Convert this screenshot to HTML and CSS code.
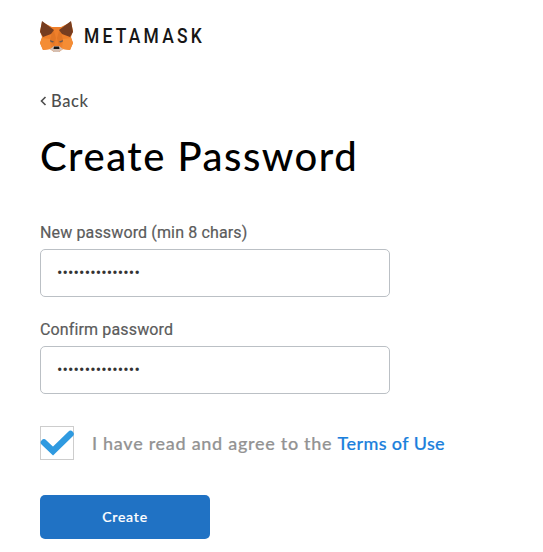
FILE: index.html
```
<!DOCTYPE html>
<html lang="en">
<head>
    <meta charset="UTF-8">
    <meta name="viewport" content="width=device-width, initial-scale=1.0">
    <title>MetaMask</title>
    <link rel="stylesheet" href="styles.css">
</head>
<body>
    <header class="logo">
        <svg class="fox" viewBox="0 0 33 31">
            <path fill="#ef7f2a" d="M2 1 12 6H21L31 1 33 10 31 16 33 22 30 29 23 28 19 31H14L10 28 3 29 0 22 2 16 0 10Z"/>
            <path fill="#f48d35" d="M0 22 2 17 10 18 11 28 3 29ZM33 22 31 17 23 18 22 28 30 29Z"/>
            <path fill="#e27625" d="M13 7 16 17 14 25 10 19ZM20 7 17 17 19 25 23 19Z"/>
            <path fill="#763d20" d="M2 0 14 9 11 13 3 16 0 11ZM31 0 19 9 22 13 30 16 33 11Z"/>
            <path fill="#6d5a50" d="M10 19 14 20.500 13 21.500 10.500 21ZM23 19 19 20.500 20 21.500 22.500 21Z"/>
            <path fill="#d5bfb2" d="M10 28 14 25H19L23 28 19 31H14Z"/>
            <path fill="#161616" d="M14 25.500H19L19.500 28H13.500Z"/>
        </svg>
        <span class="wordmark">METAMASK</span>
    </header>

    <a class="back">
        <svg class="chevron" viewBox="0 0 7 10"><path d="M5.500 1 1.500 5 5.500 9"/></svg>
        <span>Back</span>
    </a>

    <h1>Create Password</h1>

    <form>
        <div class="field">
            <label for="password">New password (min 8 chars)</label>
            <input type="password" id="password" value="abcdefghijklmno">
        </div>
        <div class="field">
            <label for="confirm">Confirm password</label>
            <input type="password" id="confirm" value="abcdefghijklmno">
        </div>

        <div class="terms">
            <div class="checkbox">
                <svg viewBox="0 0 32 32"><path d="M3 15.500 12 24 29.500 7"/></svg>
            </div>
            <p>I have read and agree to the <a>Terms of Use</a></p>
        </div>

        <button type="button">Create</button>
    </form>
</body>
</html>
```
FILE: styles.css
```
* {
    margin: 0;
    padding: 0;
    box-sizing: border-box;
}

body {
    background-color: white;
    font-family: Lato, sans-serif;
    padding: 20px 40px 0;
    overflow: hidden;
}

.logo {
    display: flex;
    align-items: center;
    height: 32px;
}

.fox {
    width: 33px;
    height: 31px;
    margin-right: 11px;
}

/* narrow the letters to get the condensed wordmark */
.wordmark {
    font-family: Roboto, sans-serif;
    font-size: 21px;
    font-weight: 500;
    letter-spacing: 3.9px;
    color: #161616;
    transform: scaleX(0.83);
    transform-origin: left;
}

.back {
    display: flex;
    align-items: center;
    height: 20px;
    margin-top: 39px;
    font-size: 16.5px;
    font-weight: 500;
    letter-spacing: 0.6px;
    color: #4d4d4d;
}

.chevron {
    width: 7px;
    height: 10px;
    margin-right: 4px;
    fill: none;
    stroke: #4d4d4d;
    stroke-width: 1.6;
}

h1 {
    margin-top: 17px;
    height: 57px;
    line-height: 56px;
    font-size: 40px;
    font-weight: 500;
    letter-spacing: 1.5px;
    white-space: nowrap;
}

.field {
    width: 350px;
    margin-bottom: 21px;
}

form {
    padding-top: 36px;
}

label {
    display: block;
    height: 28px;
    line-height: 24px;
    font-family: Roboto, sans-serif;
    font-size: 16px;
    font-weight: 400;
    letter-spacing: 0.14px;
    color: #5b5b5b;
    -webkit-text-stroke: 0.2px;
}

input {
    display: block;
    width: 350px;
    height: 48px;
    padding: 0 16px 2px;
    border: 1px solid #bbc0c5;
    border-radius: 5px;
    font-family: Roboto, sans-serif;
    font-size: 16px;
    letter-spacing: 0.13px;
    color: #333;
}

.terms {
    display: flex;
    align-items: center;
    margin-top: 32px;
    font-size: 18px;
    font-weight: 500;
    letter-spacing: 0.71px;
    color: #939393;
    white-space: nowrap;
    -webkit-text-stroke: 0.2px;
}

.checkbox {
    width: 34px;
    height: 34px;
    margin-right: 18px;
    border: 1px solid #cdcdcd;
}

.checkbox svg {
    display: block;
    fill: none;
    stroke: #2f9ae0;
    stroke-width: 6.5;
    stroke-linecap: round;
    overflow: visible;
}

.terms a {
    color: #1b7fdc;
    letter-spacing: 0.4px;
}

button {
    display: block;
    width: 170px;
    height: 44px;
    margin-top: 35px;
    border: none;
    border-radius: 5px;
    background-color: #2072c4;
    color: white;
    font-family: Lato, sans-serif;
    font-size: 14px;
    font-weight: 500;
    letter-spacing: 0.8px;
    padding-bottom: 2px;
    -webkit-text-stroke: 0.2px;
}
```
